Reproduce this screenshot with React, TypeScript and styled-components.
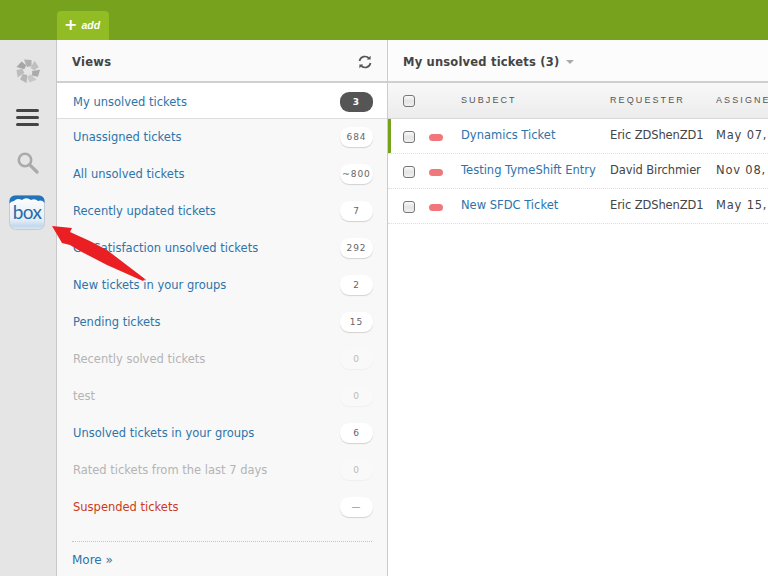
import React from "react";
import styled, { createGlobalStyle } from "styled-components";

interface ViewData {
  name: string;
  count: string;
  muted?: boolean;
  alert?: boolean;
  active?: boolean;
}

interface TicketData {
  subject: string;
  requester: string;
  date: string;
  current?: boolean;
}

const views: ViewData[] = [
  { name: "My unsolved tickets", count: "3", active: true },
  { name: "Unassigned tickets", count: "684" },
  { name: "All unsolved tickets", count: "~800" },
  { name: "Recently updated tickets", count: "7" },
  { name: "GetSatisfaction unsolved tickets", count: "292" },
  { name: "New tickets in your groups", count: "2" },
  { name: "Pending tickets", count: "15" },
  { name: "Recently solved tickets", count: "0", muted: true },
  { name: "test", count: "0", muted: true },
  { name: "Unsolved tickets in your groups", count: "6" },
  { name: "Rated tickets from the last 7 days", count: "0", muted: true },
  { name: "Suspended tickets", count: "—", alert: true },
];

const tickets: TicketData[] = [
  { subject: "Dynamics Ticket", requester: "Eric ZDShenZD1", date: "May 07, 2012", current: true },
  { subject: "Testing TymeShift Entry", requester: "David Birchmier", date: "Nov 08, 2012" },
  { subject: "New SFDC Ticket", requester: "Eric ZDShenZD1", date: "May 15, 2012" },
];

const petalShades = ["#b0b0b0", "#c0c0c0", "#aaaaaa", "#c8c8c8", "#b6b6b6", "#bcbcbc", "#a6a6a6"];

const GlobalStyle = createGlobalStyle`
  html, body {
    margin: 0;
    height: 576px;
    overflow: hidden;
    background: #fff;
    font-family: "DejaVu Sans", "Liberation Sans", sans-serif;
  }
`;

const App: React.FC = () => {
  return (
    <Page>
      <GlobalStyle />
      <TopBar>
        <AddTab>
          <AddPlus>+</AddPlus>
          <AddLabel>add</AddLabel>
        </AddTab>
      </TopBar>
      <Body>
        <Rail>
          <RailSlot $height={62}>
            <svg width="24" height="24" viewBox="0 0 24 24">
              {petalShades.map((shade, i) => (
                <path
                  key={i}
                  d="M8 0.5 L15.5 1 L15.5 7 L11 8 Z"
                  fill={shade}
                  transform={`rotate(${(i * 360) / 7} 12 12)`}
                />
              ))}
            </svg>
          </RailSlot>
          <RailSlot $height={30}>
            <MenuIcon>
              <i />
              <i />
              <i />
            </MenuIcon>
          </RailSlot>
          <RailSlot $height={62}>
            <svg width="22" height="22" viewBox="0 0 22 22">
              <circle cx="8" cy="8" r="6.2" fill="none" stroke="#aaa" strokeWidth="2.6" />
              <path d="M12.8 12.8 L20 20" stroke="#aaa" strokeWidth="3.2" strokeLinecap="round" />
            </svg>
          </RailSlot>
          <RailSlot $height={36}>
            <BoxIcon>
              <svg width="36" height="35" viewBox="0 0 36 35">
                <defs>
                  <linearGradient id="boxBg" x1="0" y1="0" x2="0" y2="1">
                    <stop offset="0" stopColor="#ffffff" />
                    <stop offset="0.72" stopColor="#e4edf6" />
                    <stop offset="0.9" stopColor="#c2d8ec" />
                    <stop offset="1" stopColor="#dfe9f2" />
                  </linearGradient>
                </defs>
                <rect x="0.5" y="0.5" width="35" height="34" rx="6" fill="url(#boxBg)" stroke="#c4ccd3" />
                <path
                  d="M0.5 8.5 V6 A5.5 5.5 0 0 1 6 0.5 H30 A5.5 5.5 0 0 1 35.5 6 V8 Q33 4.5 29 6 Q26 3 22 5 Q17 1.5 13 5 Q8 2.5 5 6 Q2 6 0.5 8.5 Z"
                  fill="#2273bb"
                />
              </svg>
              <BoxWord>box</BoxWord>
            </BoxIcon>
          </RailSlot>
        </Rail>
        <ViewsPanel>
          <PanelHeader>
            <PanelTitle>Views</PanelTitle>
            <svg width="14" height="14" viewBox="0 0 14 14" fill="none" stroke="#555" strokeWidth="1.7">
              <path d="M1.5 6 A5.5 5.5 0 0 1 11.2 3.6" />
              <path d="M12.5 8 A5.5 5.5 0 0 1 2.8 10.4" />
              <path d="M12.6 0.8 V4.6 H8.8 Z" fill="#555" stroke="none" />
              <path d="M1.4 13.2 V9.4 H5.2 Z" fill="#555" stroke="none" />
            </svg>
          </PanelHeader>
          <ViewList>
            {views.map((view) => (
              <ViewRow key={view.name} $active={view.active}>
                <ViewName $muted={view.muted} $alert={view.alert}>
                  {view.name}
                </ViewName>
                <CountPill $active={view.active} $muted={view.muted}>
                  {view.count}
                </CountPill>
              </ViewRow>
            ))}
          </ViewList>
          <MoreRow>
            <MoreLink>More »</MoreLink>
          </MoreRow>
        </ViewsPanel>
        <Main>
          <MainHeader>
            <MainTitle>My unsolved tickets (3)</MainTitle>
            <Caret />
          </MainHeader>
          <TableHead>
            <CheckCell>
              <CheckBox />
            </CheckCell>
            <PriorityCell />
            <SubjectCell>
              <HeadLabel>SUBJECT</HeadLabel>
            </SubjectCell>
            <RequesterCell>
              <HeadLabel>REQUESTER</HeadLabel>
            </RequesterCell>
            <DateCell>
              <HeadLabel>ASSIGNEE</HeadLabel>
            </DateCell>
          </TableHead>
          {tickets.map((ticket) => (
            <TicketRow key={ticket.subject} $current={ticket.current}>
              <CheckCell>
                <CheckBox />
              </CheckCell>
              <PriorityCell>
                <PriorityDot />
              </PriorityCell>
              <SubjectCell>
                <SubjectLink>{ticket.subject}</SubjectLink>
              </SubjectCell>
              <RequesterCell>{ticket.requester}</RequesterCell>
              <DateCell>{ticket.date}</DateCell>
            </TicketRow>
          ))}
        </Main>
      </Body>
      <Arrow width="100" height="60" viewBox="0 0 100 60">
        <path
          d="M1 1 L21 3 L19 7 Q38 15 56 25 L94 54 L92 56 L56 40 L29 26 L19 20 L11 18 Z"
          fill="#ea1f24"
        />
      </Arrow>
    </Page>
  );
};

const Page = styled.div`
  position: relative;
  width: 768px;
  height: 576px;
  overflow: hidden;
  font-size: 12px;
  color: #444;
`;

const TopBar = styled.div`
  height: 40px;
  box-sizing: border-box;
  padding: 11px 0 0 57px;
  background: #77a21e;
  display: flex;
  align-items: flex-end;
`;

const AddTab = styled.div`
  width: 52px;
  height: 29px;
  box-sizing: border-box;
  padding: 0 0 2px 7px;
  background: #91bc23;
  border-radius: 4px 4px 0 0;
  display: flex;
  align-items: center;
  gap: 4px;
  color: #fff;
`;

const AddPlus = styled.span`
  font-size: 16px;
  font-weight: bold;
  line-height: 16px;
`;

const AddLabel = styled.span`
  font-family: "Liberation Sans", sans-serif;
  font-size: 10.5px;
  font-style: italic;
  font-weight: bold;
`;

const Body = styled.div`
  display: flex;
  height: 536px;
`;

const Rail = styled.div`
  width: 57px;
  flex: none;
  box-sizing: border-box;
  background: #e5e5e5;
  border-right: 1px solid #c8c8c8;
`;

const RailSlot = styled.div<{ $height: number }>`
  height: ${(p) => p.$height}px;
  display: flex;
  align-items: center;
  justify-content: center;
`;

const MenuIcon = styled.div`
  width: 23px;
  margin-right: 1px;
  display: flex;
  flex-direction: column;
  gap: 4px;

  i {
    display: block;
    height: 3px;
    border-radius: 2px;
    background: #444;
  }
`;

const BoxIcon = styled.div`
  position: relative;
  width: 36px;
  height: 35px;
  margin: 1px 2px 0 0;
`;

const BoxWord = styled.span`
  position: absolute;
  left: 0;
  right: 0;
  top: 6px;
  text-align: center;
  font-family: "Lato", "Liberation Sans", sans-serif;
  font-size: 19px;
  line-height: 22px;
  letter-spacing: -0.6px;
  color: #2a6aa8;
`;

const ViewsPanel = styled.div`
  width: 331px;
  flex: none;
  box-sizing: border-box;
  display: flex;
  flex-direction: column;
  background: #f8f8f8;
  border-right: 1px solid #ccc;
`;

const PanelHeader = styled.div`
  height: 43px;
  box-sizing: border-box;
  padding: 2px 15px 0;
  display: flex;
  align-items: center;
  justify-content: space-between;
  background: #fafafa;
  border-bottom: 2px solid #cfcfcf;
`;

const PanelTitle = styled.div`
  font-size: 11.5px;
  font-weight: bold;
  color: #444;
  letter-spacing: 0.3px;
`;

const ViewList = styled.div`
  display: flex;
  flex-direction: column;
`;

const ViewRow = styled.div<{ $active?: boolean }>`
  height: ${(p) => (p.$active ? "33px" : "37px")};
  padding: ${(p) => (p.$active ? "2px" : "0")} 14px 0 16px;
  margin-bottom: ${(p) => (p.$active ? "-1px" : "0")};
  display: flex;
  align-items: center;
  justify-content: space-between;
  background: ${(p) => (p.$active ? "#fff" : "transparent")};
  border-bottom: ${(p) => (p.$active ? "1px solid #ddd" : "none")};
`;

const ViewName = styled.span<{ $muted?: boolean; $alert?: boolean }>`
  font-size: 11.5px;
  color: ${(p) => (p.$alert ? "#cc3a20" : p.$muted ? "#b4b4b4" : "#2d74aa")};
`;

const CountPill = styled.span<{ $active?: boolean; $muted?: boolean }>`
  width: 33px;
  height: 20px;
  display: flex;
  align-items: center;
  justify-content: center;
  border-radius: 9px;
  font-size: 9px;
  letter-spacing: 1px;
  color: ${(p) => (p.$active ? "#fff" : p.$muted ? "#bbb" : "#666")};
  font-weight: ${(p) => (p.$active ? "bold" : "normal")};
  background: ${(p) => (p.$active ? "#555" : p.$muted ? "#f9f9f9" : "#fff")};
  box-shadow: ${(p) =>
    p.$active ? "none" : p.$muted ? "0 1px 1px #efefef" : "0 1px 1px #d2d2d2"};
`;

const MoreRow = styled.div`
  margin: 16px 15px 0;
  padding-top: 11px;
  border-top: 1px dotted #c4c4c4;
`;

const MoreLink = styled.span`
  font-size: 12px;
  color: #2d74aa;
`;

const Main = styled.div`
  flex: 1;
  min-width: 0;
  background: #fff;
`;

const MainHeader = styled.div`
  height: 43px;
  box-sizing: border-box;
  padding: 2px 0 0 15px;
  display: flex;
  align-items: center;
  gap: 7px;
  background: #fcfcfc;
  border-bottom: 2px solid #cfcfcf;
`;

const MainTitle = styled.div`
  font-size: 11.5px;
  font-weight: bold;
  color: #444;
  letter-spacing: 0.2px;
`;

const Caret = styled.span`
  width: 0;
  height: 0;
  margin-top: 1px;
  border-left: 4px solid transparent;
  border-right: 4px solid transparent;
  border-top: 4px solid #aaa;
`;

const CheckCell = styled.div`
  width: 41px;
  flex: none;
  display: flex;
  justify-content: center;
`;

const CheckBox = styled.span`
  width: 10px;
  height: 10px;
  border: 1px solid #777;
  border-radius: 3px;
  background: linear-gradient(#fafafa 0%, #e4e4e4 50%, #f0f0f0 100%);
`;

const PriorityCell = styled.div`
  width: 32px;
  flex: none;
`;

const PriorityDot = styled.span`
  display: block;
  width: 14px;
  height: 7px;
  border-radius: 4px;
  background: #f0787c;
`;

const SubjectCell = styled.div`
  width: 149px;
  flex: none;
`;

const RequesterCell = styled.div`
  width: 106px;
  flex: none;
  letter-spacing: -0.1px;
`;

const DateCell = styled.div`
  flex: 1;
  min-width: 0;
  overflow: hidden;
  white-space: nowrap;
  letter-spacing: 0.8px;
`;

const TableHead = styled.div`
  height: 36px;
  box-sizing: border-box;
  display: flex;
  align-items: center;
  background: linear-gradient(#f8f8f8, #ececec);
  border-bottom: 1px solid #d8d8d8;

  ${SubjectCell}, ${RequesterCell}, ${DateCell} {
    margin-bottom: 3px;
  }
`;

const TicketRow = styled.div<{ $current?: boolean }>`
  position: relative;
  height: 35px;
  box-sizing: border-box;
  padding-bottom: 2px;
  display: flex;
  align-items: center;
  border-bottom: 1px dotted #ddd;
  white-space: nowrap;
  font-size: 11.5px;
  color: #444;

  ${CheckCell}, ${PriorityCell} {
    margin-top: 4px;
  }

  ${(p) =>
    p.$current &&
    `&::before {
      content: "";
      position: absolute;
      left: 0;
      top: 0;
      bottom: 0;
      width: 3px;
      background: #77a21e;
    }`}
`;

const HeadLabel = styled.span`
  font-family: "Liberation Sans", sans-serif;
  font-size: 9px;
  letter-spacing: 2.1px;
  color: #555;
`;

const SubjectLink = styled.span`
  color: #2d74aa;
`;

const Arrow = styled.svg`
  position: absolute;
  left: 51px;
  top: 225px;
`;

export default App;
